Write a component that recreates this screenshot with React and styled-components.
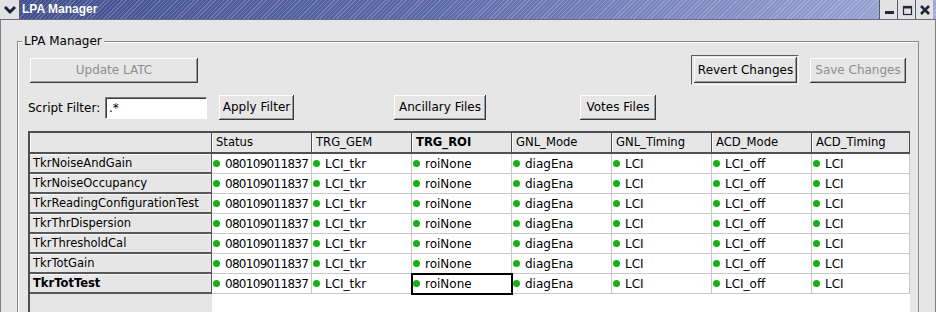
import React from "react";
import styled, { createGlobalStyle } from "styled-components";

const Global = createGlobalStyle`
  html, body { margin: 0; padding: 0; background: #e6e6e6; }
  body { font-family: "DejaVu Sans", "Liberation Sans", sans-serif; color: #000; }
  * { box-sizing: border-box; }
`;

const Win = styled.div`
  width: 936px;
  height: 312px;
  overflow: hidden;
  background: #e6e6e6;
  display: flex;
  flex-direction: column;
`;

const TitleBar = styled.div`
  height: 20px;
  flex: none;
  display: flex;
  align-items: stretch;
  background:
    repeating-linear-gradient(135deg, rgba(255,255,255,0) 0 2px, rgba(255,255,255,0.2) 2px 3px),
    linear-gradient(90deg, #3f4d8c 0%, #5a68a8 45%, #9ea8d6 100%);
  border-bottom: 1px solid #6a6a80;
`;

const MenuBox = styled.div`
  width: 20px;
  flex: none;
  background: #e2e2e2;
  border-right: 1px solid #5a5a6e;
  display: flex;
  align-items: center;
  justify-content: center;
`;

const TitleText = styled.div`
  font-family: "Liberation Sans", Arial, sans-serif;
  font-weight: bold;
  font-size: 12px;
  color: #fff;
  line-height: 19px;
  padding-left: 2px;
  flex: 1;
  text-shadow: 0 0 1px rgba(20,20,60,0.4);
`;

const WinButtons = styled.div`
  display: flex;
  margin-right: 3px;
`;

const WinButton = styled.div`
  width: 18px;
  height: 19px;
  background: #e2e2e2;
  border-left: 1px solid #5a5a6e;
  display: flex;
  align-items: center;
  justify-content: center;
`;

const Body = styled.div`
  flex: 1;
  min-height: 0;
  display: flex;
  flex-direction: column;
  padding: 21px 16px 0 16px;
  border-left: 1px solid #808080;
  border-right: 1px solid #808080;
`;

const Group = styled.div`
  position: relative;
  flex: 1;
  min-height: 0;
  display: flex;
  flex-direction: column;
  border: 1px solid #8a8a8a;
  border-bottom: none;
  box-shadow: inset 1px 1px 0 #fbfbfb;
  padding: 13px 12px 0 10px;
`;

const Legend = styled.div`
  position: absolute;
  top: -8px;
  left: 4px;
  padding: 0 2px;
  background: #e6e6e6;
  font-size: 12px;
  line-height: 14px;
`;

const Row = styled.div`
  display: flex;
  align-items: center;
  height: ${(p) => p.$h}px;
  margin-top: ${(p) => p.$mt || 0}px;
  flex: none;
`;

const Spacer = styled.div`
  flex: 1;
`;

const Button = styled.button`
  font-family: "DejaVu Sans", "Liberation Sans", sans-serif;
  font-size: 12px;
  height: 25px;
  width: ${(p) => p.$w}px;
  margin-left: ${(p) => p.$ml || 0}px;
  padding: 0 0 1px 0;
  flex: none;
  background: #e6e6e6;
  color: ${(p) => (p.disabled ? "#8e8e8e" : "#000")};
  border: none;
  box-shadow:
    inset -1px -1px 0 #3a3a3a,
    inset 1px 1px 0 #ffffff,
    inset -2px -2px 0 #9c9c9c;
  cursor: default;
`;

const DefaultFrame = styled.div`
  width: 108px;
  height: 30px;
  flex: none;
  border: 1px solid;
  border-color: #5e5e5e #f4f4f4 #f4f4f4 #5e5e5e;
  padding: 1px 1px 1px 2px;
  display: flex;
  & > button { width: 100%; height: 100%; }
`;

const Label = styled.div`
  width: 77px;
  flex: none;
  font-size: 12px;
  padding-left: 0;
`;

const Input = styled.input`
  width: 102px;
  height: 22px;
  flex: none;
  font-family: "DejaVu Sans", "Liberation Sans", sans-serif;
  font-size: 12px;
  padding: 0 0 0 3px;
  background: #fff;
  border: 1px solid;
  border-color: #7c7c7c #fff #fff #7c7c7c;
  box-shadow: inset 1px 1px 0 #3c3c3c;
  outline: none;
`;

const Table = styled.div`
  margin-top: 11px;
  width: 882px;
  flex: 1;
  min-height: 0;
  border-top: 2px solid #4e4e4e;
  border-left: 2px solid #4e4e4e;
  background: linear-gradient(90deg, #e6e6e6 0 182px, #ffffff 182px);
`;

const Grid = styled.div`
  display: grid;
  grid-template-columns: 182px 100px 100px 100px 100px 100px 100px 98px;
  grid-template-rows: 21px;
  grid-auto-rows: 20px;
`;

const HeadCell = styled.div`
  background: #e6e6e6;
  border-bottom: 2px solid #505050;
  border-right: 1px solid #505050;
  box-shadow: inset 1px 0 0 #fdfdfd;
  font-size: 11.6px;
  font-weight: ${(p) => (p.$bold ? "bold" : "normal")};
  line-height: 19px;
  padding-left: 4px;
  white-space: nowrap;
  overflow: hidden;
`;

const RowHead = styled.div`
  background: #e6e6e6;
  border-bottom: 2px solid #585858;
  border-right: 1px solid #585858;
  box-shadow: inset 0 1px 0 #fafafa;
  font-size: 11.5px;
  font-weight: ${(p) => (p.$bold ? "bold" : "normal")};
  line-height: 19px;
  padding-left: 3px;
  white-space: nowrap;
  overflow: hidden;
`;

const Cell = styled.div`
  background: #fff;
  border-bottom: 1px solid #c8c8c8;
  border-right: 1px solid #c8c8c8;
  display: flex;
  align-items: center;
  gap: 5px;
  padding-left: 1px;
  font-size: 12px;
  letter-spacing: ${(p) => (p.$tight ? "-0.7px" : "0")};
  white-space: nowrap;
  overflow: hidden;
  ${(p) => (p.$selected ? "outline: 2px solid #000; outline-offset: -1px; position: relative; z-index: 1;" : "")}
`;

const Dot = styled.span`
  width: 7px;
  height: 7px;
  border-radius: 50%;
  background: #16b016;
  flex: none;
  margin-top: -1px;
`;

const columns = ["Status", "TRG_GEM", "TRG_ROI", "GNL_Mode", "GNL_Timing", "ACD_Mode", "ACD_Timing"];
const values = ["080109011837", "LCI_tkr", "roiNone", "diagEna", "LCI", "LCI_off", "LCI"];
const rows = [
  "TkrNoiseAndGain",
  "TkrNoiseOccupancy",
  "TkrReadingConfigurationTest",
  "TkrThrDispersion",
  "TkrThresholdCal",
  "TkrTotGain",
  "TkrTotTest",
];

export default function App() {
  return (
    <Win>
      <Global />
      <TitleBar>
        <MenuBox>
          <svg width="14" height="10" viewBox="0 0 14 10">
            <polyline points="2,2 7,7 12,2" fill="none" stroke="#1c1f3a" strokeWidth="3" />
          </svg>
        </MenuBox>
        <TitleText>LPA Manager</TitleText>
        <WinButtons>
          <WinButton>
            <svg width="12" height="12" viewBox="0 0 12 12">
              <rect x="2" y="7" width="9" height="3" fill="#23253a" />
            </svg>
          </WinButton>
          <WinButton>
            <svg width="12" height="12" viewBox="0 0 12 12">
              <rect x="2.5" y="2.5" width="8" height="8" fill="none" stroke="#23253a" strokeWidth="1.2" />
              <rect x="2" y="2" width="9" height="2.5" fill="#23253a" />
            </svg>
          </WinButton>
          <WinButton>
            <svg width="12" height="12" viewBox="0 0 12 12">
              <path d="M2 2 L10 10 M10 2 L2 10" stroke="#23253a" strokeWidth="2.6" />
            </svg>
          </WinButton>
        </WinButtons>
      </TitleBar>
      <Body>
        <Group>
          <Legend>LPA Manager</Legend>
          <Row $h={30}>
            <Button $w={168} $ml={2} disabled>Update LATC</Button>
            <Spacer />
            <DefaultFrame>
              <Button>Revert Changes</Button>
            </DefaultFrame>
            <Button $w={96} $ml={11} disabled>Save Changes</Button>
          </Row>
          <Row $h={25} $mt={10}>
            <Label>Script Filter:</Label>
            <Input defaultValue=".*" />
            <Button $w={75} $ml={12}>Apply Filter</Button>
            <Button $w={92} $ml={100}>Ancillary Files</Button>
            <Button $w={76} $ml={94}>Votes Files</Button>
          </Row>
          <Table>
            <Grid>
              <HeadCell />
              {columns.map((c) => (
                <HeadCell key={c} $bold={c === "TRG_ROI"}>{c}</HeadCell>
              ))}
              {rows.map((r, ri) => (
                <React.Fragment key={r}>
                  <RowHead $bold={r === "TkrTotTest"}>{r}</RowHead>
                  {values.map((v, ci) => (
                    <Cell
                      key={ci}
                      $tight={ci === 0}
                      $selected={ri === rows.length - 1 && ci === 2}
                    >
                      <Dot />
                      {v}
                    </Cell>
                  ))}
                </React.Fragment>
              ))}
            </Grid>
          </Table>
        </Group>
      </Body>
    </Win>
  );
}
